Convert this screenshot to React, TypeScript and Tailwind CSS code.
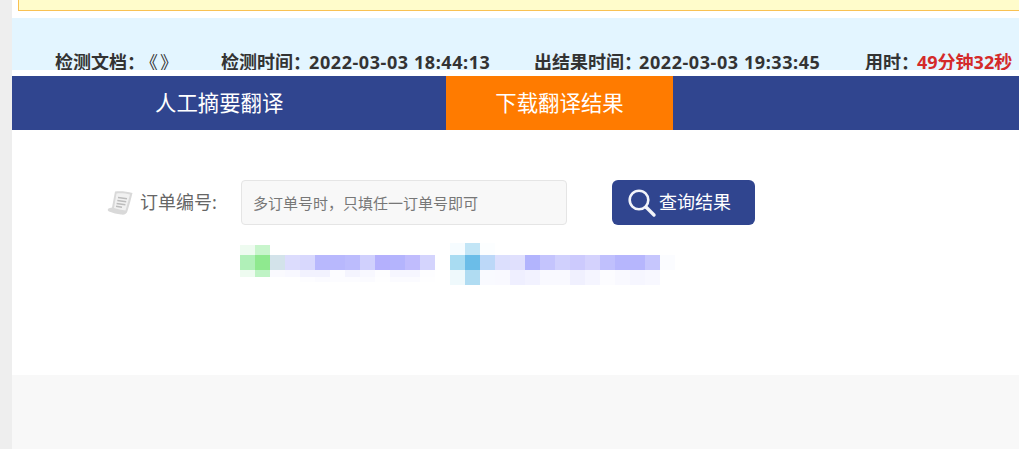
const row1L: (string | null)[] = ["#eefbf0", "#c8f5cc"];
const row2L = ["#b0f0b8", "#8fe98f", "#d3e3ea", "#dcdcfd", "#d8d8fd", "#b8b8fd", "#b8b8fd", "#bcbcfd", "#d0d0fd", "#b4b0fd", "#b4b4fd", "#c0bcfd", "#d4d4fd"];
const row3L = ["#eefbf0", "#bff3c5", "#fafafe", "#f8f8ff", "#f2f2fe", "#f2f2fe", "#fcfcff", "#f4f4fe", "#f8f8ff", "#fdfdff", "#f6f6ff", "#f6f6ff", "#fdfdff"];
const row4L = [null, null, null, null, "#fdfdff", "#fbfbff", "#fcfcff", "#fcfcff", "#fbfbff", "#fefeff", "#fbfbff", "#fbfbff", "#fefeff"];
const row1R = ["#f6fcff", "#c2e5f6", "#fcfeff"];
const row2R = ["#a9dcf2", "#6bbde8", "#bcd8f8", "#dcdffd", "#e0e0fd", "#b2b4fd", "#c4c4fd", "#d0d0fd", "#cccafd", "#d4d2fd", "#c0c0fd", "#b6b6fd", "#b6b6fd", "#c6c6fd", "#fbfcff"];
const row3R = ["#eff9fc", "#b0dcf2", "#f9faff", "#f9f9ff", "#efefff", "#f2f2ff", "#f9f9ff", "#f9f9ff", "#f0f0fe", "#f5f5ff", "#fcfcff", "#f9f9ff", "#f6f6ff", "#f8f8ff"];

function Mosaic() {
  const cells = (row: (string | null)[], x0: number, y: number, h: number) =>
    row.map((c, i) => (c ? <rect key={`${x0}-${y}-${i}`} x={x0 + i * 15} y={y} width={15} height={h} fill={c} /> : null));
  return (
    <svg width="440" height="42" viewBox="0 0 440 42" className="block">
      {cells(row1L, 0, 2, 10)}
      {cells(row2L, 0, 12, 15)}
      {cells(row3L, 0, 27, 7)}
      {cells(row4L, 0, 34, 5)}
      {cells(row1R, 210, 0, 12)}
      {cells(row2R, 210, 12, 15)}
      {cells(row3R, 210, 27, 15)}
    </svg>
  );
}

function ScrollIcon() {
  return (
    <svg width="26" height="26" viewBox="0 0 26 26" className="block">
      <path d="M8 1.5 C14 1 20 1.5 25.5 3 C24 9 22.5 15 20.5 21 C19.5 24.5 17 25 14 24.5 C10 24 6 23 2 21.5 C0 20.5 0.5 18.5 3 18 L5 17.5 Z" fill="#d9d9d9" />
      <path d="M9.5 3.5 C14 3 19 3.5 23 4.5 C21.5 10 20 15.5 18.5 20.5 C14.5 20 10.5 19 7 18 Z" fill="#f1f1f1" />
      <path d="M11 7.5 L20 8.8 M10.3 10.5 L19.2 11.8 M9.6 13.5 L18.4 14.8 M9 16.3 L15 17.2" stroke="#bcbcbc" strokeWidth="1.4" fill="none" />
    </svg>
  );
}

function SearchIcon() {
  return (
    <svg width="30" height="30" viewBox="0 0 30 30" className="block">
      <circle cx="12" cy="12" r="9.3" fill="none" stroke="#f2f4fa" strokeWidth="2.6" />
      <path d="M19 19 L27 27" stroke="#f2f4fa" strokeWidth="3.4" strokeLinecap="round" />
    </svg>
  );
}

export default function App() {
  return (
    <div className="flex h-[449px] w-full overflow-hidden bg-white font-['Noto_Sans','Noto_Sans_CJK_SC',sans-serif]">
      <div className="w-3 shrink-0 bg-[#eeeeee]" />
      <div className="flex min-w-0 flex-1 flex-col">
        <div className="ml-[6px] h-[11px] shrink-0 border-b border-l border-[#f9c152] bg-[#fffccb]" />
        <div className="mt-[7px] flex h-[52px] shrink-0 items-start overflow-hidden bg-[#e3f5ff] pl-[43px] pt-[32px] text-[18px] font-bold leading-[24px] whitespace-nowrap text-[#333333]">
          <span className="w-[166px] shrink-0">检测文档：<span className="ml-[4px] font-normal tracking-[2px]">《》</span></span>
          <span className="w-[313px] shrink-0">检测时间：<span className="-ml-[2px] tracking-[0.58px]">2022-03-03 18:44:13</span></span>
          <span className="w-[331px] shrink-0">出结果时间：<span className="-ml-[3px] tracking-[0.58px]">2022-03-03 19:33:45</span></span>
          <span className="shrink-0">用时：<span className="-ml-[2px] text-[#d42a2a]">49分钟32秒</span></span>
        </div>
        <div className="mt-[6px] flex h-[54px] shrink-0 bg-[#30458f] text-[21.4px] leading-[54px] text-white">
          <div className="w-[434px] shrink-0 pl-[143px]">人工摘要翻译</div>
          <div className="w-[227px] shrink-0 bg-[#ff7b00] text-center">下载翻译结果</div>
        </div>
        <div className="flex h-[245px] shrink-0 flex-col bg-white pt-[50px]">
          <div className="flex h-[45px] items-center">
            <div className="ml-[95px] mr-[7px] shrink-0"><ScrollIcon /></div>
            <span className="w-[101px] shrink-0 text-[18px] text-[#666666]">订单编号:</span>
            <input
              readOnly
              placeholder="多订单号时，只填任一订单号即可"
              className="h-[45px] w-[326px] shrink-0 rounded border border-[#e5e5e5] bg-[#f8f8f8] pl-[11px] text-[15px] outline-none placeholder:text-[#777777]"
            />
            <button className="ml-[45px] flex h-[45px] w-[143px] shrink-0 items-center rounded-md bg-[#30458f] pl-[15px] text-[18px] text-white">
              <SearchIcon />
              <span className="ml-[2px]">查询结果</span>
            </button>
          </div>
          <div className="ml-[228px] mt-[18px]"><Mosaic /></div>
        </div>
        <div className="flex-1 bg-[#f8f8f8]" />
      </div>
    </div>
  );
}
